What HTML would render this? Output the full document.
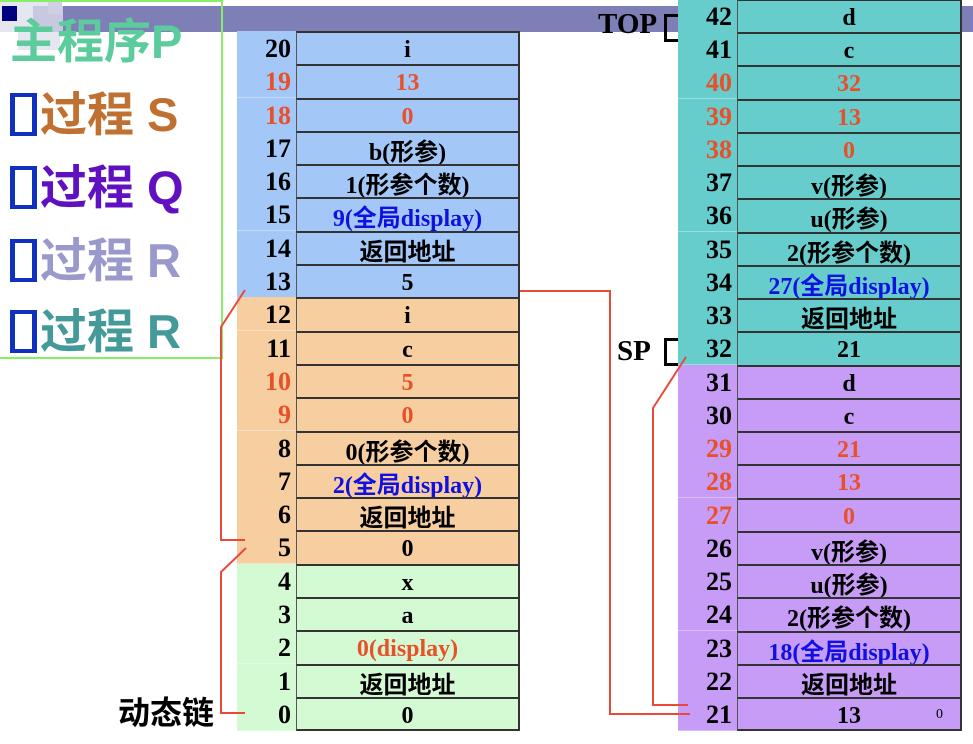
<!DOCTYPE html>
<html><head><meta charset="utf-8"><style>
*{margin:0;padding:0;box-sizing:border-box}
body{width:973px;height:744px;overflow:hidden;background:#fff;position:relative;font-family:"Liberation Serif","Noto Serif CJK SC",serif}
.a{position:absolute}
.r{position:absolute;height:34px;font-weight:bold;font-size:24px;color:#000}
.n{position:absolute;left:0;top:0;width:59px;height:34px;text-align:right;padding-right:5px;font-size:26px;line-height:35px;border-bottom:1px solid rgba(255,255,255,.35)}
.v{position:absolute;left:59px;top:0;height:34px;text-align:center;line-height:34px;border-top:2px solid #333;border-right:2px solid #333;border-left:1px solid #555}
.L{left:237px}.L .v{width:224px}
.R{left:678px}.R .v{width:225px}
.cj{font-family:"Liberation Serif","Noto Sans CJK SC",sans-serif;padding-top:5px;line-height:30px}
.o{color:#e8502a}.b{color:#1010e0}
.bl>span{background:#a3c8f8}.or>span{background:#f6cea0}.gr>span{background:#d3fad3}.te>span{background:#66cccc}.pu>span{background:#c79cf6}
.li{position:absolute;left:10px;font-family:"Liberation Sans","Noto Sans CJK SC",sans-serif;font-weight:bold;font-size:47px;line-height:52px;white-space:nowrap}
.bx{display:inline-block;width:27px;height:43px;border:4px solid #1030c0;border-left-width:5px;border-right-width:5px;vertical-align:-5px;margin-right:3px}
</style></head><body>
<div class="a" style="left:60px;top:6px;width:913px;height:26px;background:#7f7fb8"></div>
<div class="a" style="left:0;top:0;width:60px;height:32px;background:#e6e6f0"></div>
<div class="a" style="left:33px;top:6px;width:30px;height:26px;background:#c8c8e0"></div>
<div class="a" style="left:48px;top:0;width:14px;height:14px;background:#d0d0e4"></div>
<div class="a" style="left:18px;top:32px;width:42px;height:18px;background:#e6e6f0"></div>
<div class="a" style="left:2px;top:6px;width:15px;height:15px;background:#000080"></div>
<div class="a" style="left:0;top:0;width:223px;height:359px;border:2px solid #88ee66;border-left:none"></div>
<div class="li" style="top:16px;color:#5ccc9c">主程序P</div>
<div class="li" style="top:89px;color:#c07030"><span class="bx"></span>过程 S</div>
<div class="li" style="top:162px;color:#6010c0"><span class="bx"></span>过程 Q</div>
<div class="li" style="top:235px;color:#9999cc"><span class="bx"></span>过程 R</div>
<div class="li" style="top:306px;color:#449999"><span class="bx"></span>过程 R</div>
<div class="a" style="left:598px;top:7px;font-weight:bold;font-size:29px;line-height:34px">TOP</div>
<div class="a" style="left:664px;top:14px;width:14px;height:28px;border:3px solid #000;border-right:none"></div>
<div class="a" style="left:617px;top:334px;font-weight:bold;font-size:29px;line-height:34px">SP</div>
<div class="a" style="left:664px;top:338px;width:14px;height:28px;border:3px solid #000;border-right:none"></div>
<div class="a" style="left:118px;top:694px;font-family:'Liberation Sans','Noto Sans CJK SC',sans-serif;font-weight:bold;font-size:32px;line-height:38px">动态链</div>

<div class="r L bl" style="top:31px"><span class="n">20</span><span class="v">i</span></div>
<div class="r L bl" style="top:64px"><span class="n o">19</span><span class="v o">13</span></div>
<div class="r L bl" style="top:98px"><span class="n o">18</span><span class="v o">0</span></div>
<div class="r L bl" style="top:131px"><span class="n">17</span><span class="v cj">b(形参)</span></div>
<div class="r L bl" style="top:164px"><span class="n">16</span><span class="v cj">1(形参个数)</span></div>
<div class="r L bl" style="top:197px"><span class="n">15</span><span class="v cj b">9(全局display)</span></div>
<div class="r L bl" style="top:231px"><span class="n">14</span><span class="v cj">返回地址</span></div>
<div class="r L bl" style="top:264px"><span class="n">13</span><span class="v">5</span></div>
<div class="r L or" style="top:297px"><span class="n">12</span><span class="v">i</span></div>
<div class="r L or" style="top:331px"><span class="n">11</span><span class="v">c</span></div>
<div class="r L or" style="top:364px"><span class="n o">10</span><span class="v o">5</span></div>
<div class="r L or" style="top:397px"><span class="n o">9</span><span class="v o">0</span></div>
<div class="r L or" style="top:431px"><span class="n">8</span><span class="v cj">0(形参个数)</span></div>
<div class="r L or" style="top:464px"><span class="n">7</span><span class="v cj b">2(全局display)</span></div>
<div class="r L or" style="top:497px"><span class="n">6</span><span class="v cj">返回地址</span></div>
<div class="r L or" style="top:530px"><span class="n">5</span><span class="v">0</span></div>
<div class="r L gr" style="top:564px"><span class="n">4</span><span class="v">x</span></div>
<div class="r L gr" style="top:597px"><span class="n">3</span><span class="v">a</span></div>
<div class="r L gr" style="top:630px"><span class="n">2</span><span class="v o">0(display)</span></div>
<div class="r L gr" style="top:664px"><span class="n">1</span><span class="v cj">返回地址</span></div>
<div class="r L gr" style="top:697px"><span class="n">0</span><span class="v" style="border-bottom:2px solid #333">0</span></div>

<div class="r R te" style="top:-1px"><span class="n">42</span><span class="v">d</span></div>
<div class="r R te" style="top:32px"><span class="n">41</span><span class="v">c</span></div>
<div class="r R te" style="top:65px"><span class="n o">40</span><span class="v o">32</span></div>
<div class="r R te" style="top:99px"><span class="n o">39</span><span class="v o">13</span></div>
<div class="r R te" style="top:132px"><span class="n o">38</span><span class="v o">0</span></div>
<div class="r R te" style="top:165px"><span class="n">37</span><span class="v cj">v(形参)</span></div>
<div class="r R te" style="top:198px"><span class="n">36</span><span class="v cj">u(形参)</span></div>
<div class="r R te" style="top:232px"><span class="n">35</span><span class="v cj">2(形参个数)</span></div>
<div class="r R te" style="top:265px"><span class="n">34</span><span class="v cj b">27(全局display)</span></div>
<div class="r R te" style="top:298px"><span class="n">33</span><span class="v cj">返回地址</span></div>
<div class="r R te" style="top:331px"><span class="n">32</span><span class="v">21</span></div>
<div class="r R pu" style="top:365px"><span class="n">31</span><span class="v">d</span></div>
<div class="r R pu" style="top:398px"><span class="n">30</span><span class="v">c</span></div>
<div class="r R pu" style="top:431px"><span class="n o">29</span><span class="v o">21</span></div>
<div class="r R pu" style="top:464px"><span class="n o">28</span><span class="v o">13</span></div>
<div class="r R pu" style="top:498px"><span class="n o">27</span><span class="v o">0</span></div>
<div class="r R pu" style="top:531px"><span class="n">26</span><span class="v cj">v(形参)</span></div>
<div class="r R pu" style="top:564px"><span class="n">25</span><span class="v cj">u(形参)</span></div>
<div class="r R pu" style="top:597px"><span class="n">24</span><span class="v cj">2(形参个数)</span></div>
<div class="r R pu" style="top:631px"><span class="n">23</span><span class="v cj b">18(全局display)</span></div>
<div class="r R pu" style="top:664px"><span class="n">22</span><span class="v cj">返回地址</span></div>
<div class="r R pu" style="top:697px"><span class="n">21</span><span class="v" style="border-bottom:2px solid #333">13</span></div>
<div class="a" style="left:936px;top:707px;font-size:14px">0</div>

<svg class="a" style="left:0;top:0" width="973" height="744">
<g fill="none" stroke="#e84a3a" stroke-width="2">
<polyline points="245,290 221,327 221,540 245,540"/>
<polyline points="246,548 221,572 221,713 245,713"/>
<polyline points="520,291 610,291 610,714 690,714"/>
<polyline points="686,357 653,408 653,705 688,705"/>
</g></svg>
</body></html>
